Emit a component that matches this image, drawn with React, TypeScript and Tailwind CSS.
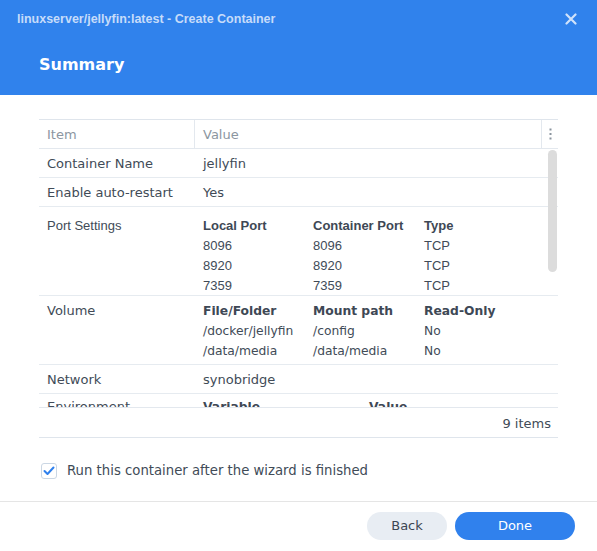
import React from "react";

const dv = { fontFamily: '"DejaVu Sans", Verdana, sans-serif' };
const ar = { fontFamily: '"Liberation Sans", Arial, sans-serif' };

function SimpleRow({ label, value }: { label: string; value: string }) {
  return (
    <div className="flex h-[29px] pt-[2px] border-b border-[#e6ebf0] items-center text-[13px] text-[#414b57]" style={dv}>
      <div className="w-[155px] pl-[8px]">{label}</div>
      <div className="pl-[9px]">{value}</div>
    </div>
  );
}

export default function App() {
  const ports = [
    ["8096", "8096", "TCP"],
    ["8920", "8920", "TCP"],
    ["7359", "7359", "TCP"],
  ];
  const vols = [
    ["/docker/jellyfin", "/config", "No"],
    ["/data/media", "/data/media", "No"],
  ];
  return (
    <div className="w-[597px] h-[551px] bg-white flex flex-col overflow-hidden">
      {/* header */}
      <div className="h-[95px] bg-[#3082ec] flex flex-col shrink-0">
        <div className="h-[38px] flex items-center justify-between pl-[17px] pr-[20px]">
          <span className="text-[12.5px] font-bold text-[#c6dcfa]" style={ar}>
            linuxserver/jellyfin:latest - Create Container
          </span>
          <svg width="12" height="12" viewBox="0 0 12 12">
            <path d="M1.5 1.5 L10.5 10.5 M10.5 1.5 L1.5 10.5" stroke="#cfe2fb" strokeWidth="2.2" strokeLinecap="round" />
          </svg>
        </div>
        <div className="pl-[39px] mt-[15px] text-[16px] font-bold text-white leading-[24px]" style={dv}>
          Summary
        </div>
      </div>

      {/* body */}
      <div className="px-[39px] pt-[24px]">
        <div className="border-t border-b border-[#dfe5ec]">
          {/* table header */}
          <div className="flex h-[29px] border-b border-[#e3e8ee] text-[13px] text-[#8c96a1]" style={dv}>
            <div className="w-[155px] pl-[8px] pt-[2px] flex items-center">Item</div>
            <div className="flex-1 border-l border-[#e3e8ee] pl-[8px] pt-[2px] flex items-center">Value</div>
            <div className="w-[17px] border-l border-[#e3e8ee] flex items-center justify-center">
              <svg width="3" height="12" viewBox="0 0 3 12">
                <rect x="0.5" y="0.5" width="2" height="2" fill="#8a949e" />
                <rect x="0.5" y="5" width="2" height="2" fill="#8a949e" />
                <rect x="0.5" y="9.5" width="2" height="2" fill="#8a949e" />
              </svg>
            </div>
          </div>

          {/* scroll area */}
          <div className="relative h-[258px] overflow-hidden">
            <SimpleRow label="Container Name" value="jellyfin" />
            <SimpleRow label="Enable auto-restart" value="Yes" />

            <div className="flex h-[89px] border-b border-[#e6ebf0] pt-[9px] text-[13px] text-[#414b57] leading-[20px]" style={ar}>
              <div className="w-[155px] pl-[8px]">Port Settings</div>
              <div className="pl-[9px] flex flex-col">
                <div className="flex font-bold text-[#3e4855]">
                  <div className="w-[110px]">Local Port</div>
                  <div className="w-[111px]">Container Port</div>
                  <div>Type</div>
                </div>
                {ports.map((p, i) => (
                  <div key={i} className="flex">
                    <div className="w-[110px]">{p[0]}</div>
                    <div className="w-[111px]">{p[1]}</div>
                    <div>{p[2]}</div>
                  </div>
                ))}
              </div>
            </div>

            <div className="flex h-[69px] border-b border-[#e6ebf0] pt-[5px] text-[13px] text-[#414b57] leading-[20px]" style={dv}>
              <div className="w-[155px] pl-[8px]">Volume</div>
              <div className="pl-[9px] flex flex-col">
                <div className="flex font-bold text-[#3e4855] text-[12.3px]">
                  <div className="w-[110px]">File/Folder</div>
                  <div className="w-[111px]">Mount path</div>
                  <div>Read-Only</div>
                </div>
                {vols.map((v, i) => (
                  <div key={i} className="flex text-[12.3px]">
                    <div className="w-[110px]">{v[0]}</div>
                    <div className="w-[111px]">{v[1]}</div>
                    <div>{v[2]}</div>
                  </div>
                ))}
              </div>
            </div>

            <SimpleRow label="Network" value="synobridge" />

            <div className="flex h-[60px] pt-[3px] text-[13px] text-[#414b57] leading-[20px]" style={dv}>
              <div className="w-[155px] pl-[8px]">Environment</div>
              <div className="pl-[9px] flex font-bold text-[#3e4855] text-[12.3px]">
                <div className="w-[166px]">Variable</div>
                <div>Value</div>
              </div>
            </div>

            <div className="absolute right-[1px] top-[1px] w-[9px] h-[122px] rounded-full bg-[#dcdcdc]" />
          </div>

          {/* footer */}
          <div className="h-[30px] pt-[2px] border-t border-[#e3e8ee] flex items-center justify-end pr-[7px] text-[13px] text-[#414b57]" style={dv}>
            9 items
          </div>
        </div>

        {/* checkbox */}
        <div className="flex items-center mt-[24px] ml-[2px] h-[18px]">
          <div className="w-[16px] h-[16px] rounded-[3px] border border-[#cbd7e4] bg-white flex items-center justify-center">
            <svg width="12" height="10" viewBox="0 0 12 10">
              <path d="M1.5 5 L4.5 8 L10.5 1.5" fill="none" stroke="#2f80ed" strokeWidth="2" strokeLinecap="round" strokeLinejoin="round" />
            </svg>
          </div>
          <span className="ml-[10px] text-[13.25px] text-[#414b57]" style={dv}>
            Run this container after the wizard is finished
          </span>
        </div>
      </div>

      {/* bottom bar */}
      <div className="mt-[21px] border-t border-[#e5e5e5] flex justify-end gap-[8px] pr-[22px] pt-[10px]">
        <button className="w-[80px] h-[28px] rounded-full bg-[#e8edf3] text-[13px] text-[#3c4653]" style={dv}>
          Back
        </button>
        <button className="w-[120px] h-[28px] rounded-full bg-[#3081ed] text-[13px] text-white" style={dv}>
          Done
        </button>
      </div>
    </div>
  );
}
